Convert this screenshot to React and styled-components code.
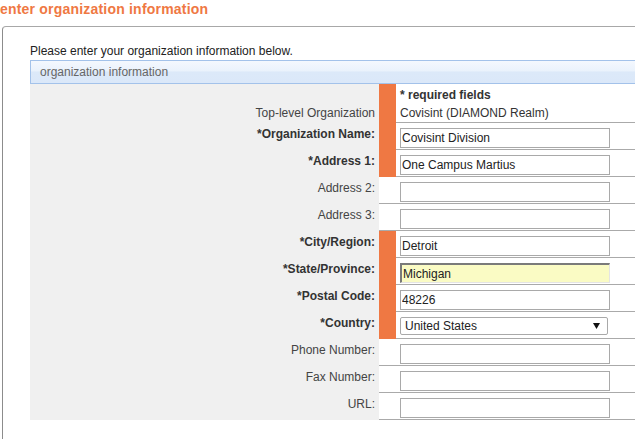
import styled, { createGlobalStyle } from 'styled-components'

const GlobalStyle = createGlobalStyle`
  html, body {
    margin: 0;
    padding: 0;
    background: #ffffff;
    overflow: hidden;
  }
  body {
    font-family: "Liberation Sans", Arial, sans-serif;
    font-size: 12px;
    color: #333;
  }
`

const ORANGE = '#ef7843'

const Page = styled.div`
  width: 635px;
  height: 439px;
  display: flex;
  flex-direction: column;
  overflow: hidden;
`

const Title = styled.h1`
  margin: 0 0 9px 0;
  padding-top: 1px;
  font-size: 14px;
  line-height: 16px;
  font-weight: bold;
  letter-spacing: 0.2px;
  color: ${ORANGE};
`

const Panel = styled.div`
  flex: 1;
  margin-left: 2px;
  border-left: 1px solid #8c8c8c;
  border-top: 1px solid #a8a8a8;
  border-top-left-radius: 4px;
  padding: 17px 0 0 27px;
`

const Intro = styled.p`
  margin: 0 0 2px 0;
  line-height: 14px;
  color: #222;
`

const SectionBar = styled.div`
  height: 22px;
  line-height: 22px;
  padding-left: 9px;
  border: 1px solid #a3c2ea;
  border-right: none;
  background: linear-gradient(#f4f8fe 0%, #eaf2fc 45%, #dce9f9 50%, #dbe8f9 100%);
  color: #666;
`

const Row = styled.div`
  display: grid;
  grid-template-columns: 349px 17px 1fr;
  height: ${p => p.$h}px;
`

const Label = styled.div`
  background: #f0f0f0;
  text-align: right;
  padding: ${p => p.$pt}px 4px 0 0;
  line-height: 14px;
  color: ${p => (p.$bold ? '#333' : '#444')};
  font-weight: ${p => (p.$bold ? 'bold' : 'normal')};
`

const Marker = styled.div`
  background: ${p => (p.$on ? ORANGE : '#fff')};
  border-bottom: ${p => (p.$line ? `1px solid ${p.$on ? ORANGE : '#aaa'}` : 'none')};
`

const Field = styled.div`
  padding: ${p => p.$pt}px 0 0 4px;
  line-height: 14px;
  color: #333;
  font-weight: ${p => (p.$bold ? 'bold' : 'normal')};
  border-bottom: ${p => (p.$line ? '1px solid #aaa' : 'none')};
`

const TextInput = styled.input`
  box-sizing: border-box;
  display: block;
  width: 210px;
  height: 20px;
  margin: 0;
  padding: 0 1px;
  font-family: "Liberation Sans", Arial, sans-serif;
  font-size: 12px;
  color: #222;
  background: ${p => (p.$hl ? '#fafbc4' : '#fff')};
  border-style: solid;
  border-color: ${p => (p.$hl ? '#7a7a7a #e4e4e4 #e4e4e4 #7a7a7a' : '#a9a9a9')};
  border-width: ${p => (p.$hl ? '2px 1px 1px 2px' : '1px')};
  outline: none;
`

const SelectBox = styled.div`
  box-sizing: border-box;
  width: 208px;
  height: 18px;
  display: flex;
  align-items: center;
  justify-content: space-between;
  padding: 0 7px 0 4px;
  border: 1px solid #a9a9a9;
  border-radius: 2px;
  background: #fff;
  color: #222;
  line-height: 16px;
`

const Arrow = () => (
  <svg width="7" height="6" viewBox="0 0 7 6">
    <path d="M0 0 H7 L3.5 6 Z" fill="#111" />
  </svg>
)

const fields = [
  { label: 'Organization Name', req: true, value: 'Covisint Division' },
  { label: 'Address 1', req: true, value: 'One Campus Martius' },
  { label: 'Address 2' },
  { label: 'Address 3' },
  { label: 'City/Region', req: true, value: 'Detroit' },
  { label: 'State/Province', req: true, value: 'Michigan', hl: true },
  { label: 'Postal Code', req: true, value: '48226' },
  { label: 'Country', req: true, select: 'United States' },
  { label: 'Phone Number' },
  { label: 'Fax Number' },
  { label: 'URL' },
]

export default function App() {
  return (
    <Page>
      <GlobalStyle />
      <Title>enter organization information</Title>
      <Panel>
        <Intro>Please enter your organization information below.</Intro>
        <SectionBar>organization information</SectionBar>

        <Row $h={19}>
          <Label $pt={4} />
          <Marker $on />
          <Field $pt={4} $bold>* required fields</Field>
        </Row>
        <Row $h={20}>
          <Label $pt={3}>Top-level Organization</Label>
          <Marker $on $line />
          <Field $pt={3} $line>Covisint (DIAMOND Realm)</Field>
        </Row>

        {fields.map(f => (
          <Row $h={27} key={f.label}>
            <Label $pt={4} $bold={f.req}>
              {f.req ? `*${f.label}:` : `${f.label}:`}
            </Label>
            <Marker $on={f.req} $line />
            <Field $pt={5} $line>
              {f.select ? (
                <SelectBox>
                  <span>{f.select}</span>
                  <Arrow />
                </SelectBox>
              ) : (
                <TextInput type="text" defaultValue={f.value || ''} $hl={f.hl} />
              )}
            </Field>
          </Row>
        ))}
      </Panel>
    </Page>
  )
}
